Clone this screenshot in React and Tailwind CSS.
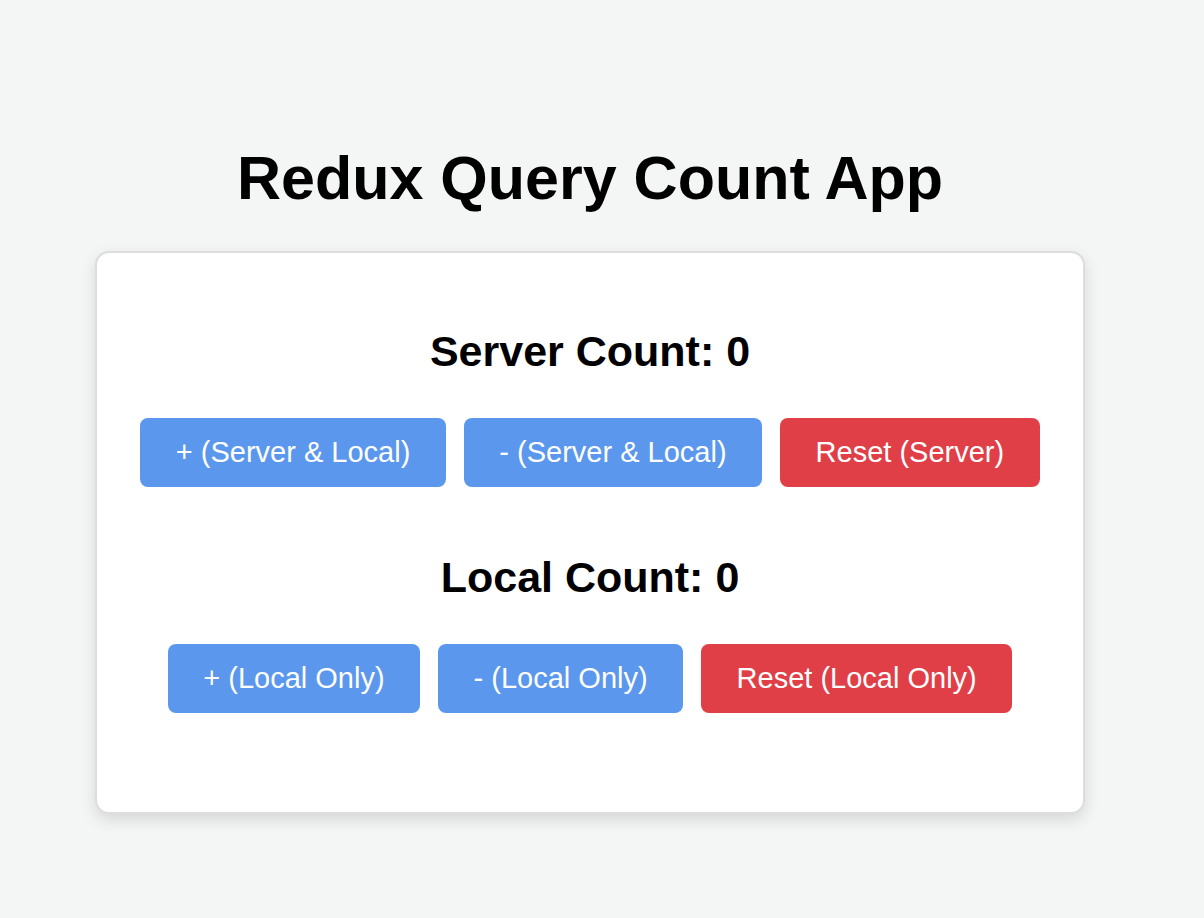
const serverButtons = [
  { label: '+ (Server & Local)', color: 'bg-[#5a97ed]' },
  { label: '- (Server & Local)', color: 'bg-[#5a97ed]' },
  { label: 'Reset (Server)', color: 'bg-[#e03f47]' },
];

const localButtons = [
  { label: '+ (Local Only)', color: 'bg-[#5a97ed]' },
  { label: '- (Local Only)', color: 'bg-[#5a97ed]' },
  { label: 'Reset (Local Only)', color: 'bg-[#e03f47]' },
];

function Counter({ title, buttons, className }) {
  return (
    <div className={`flex flex-col items-center ${className}`}>
      <h2 className="text-[43px] leading-[50px] font-bold text-black">{title}</h2>
      <div className="mt-[42px] flex gap-[18px]">
        {buttons.map((b) => (
          <button
            key={b.label}
            className={`${b.color} h-[69px] px-[35.5px] rounded-[8px] text-white text-[29px]`}
          >
            {b.label}
          </button>
        ))}
      </div>
    </div>
  );
}

export default function App() {
  return (
    <div className="min-h-screen bg-[#f4f5f5] flex flex-col items-center pt-[143px] pr-[24px] font-['Liberation_Sans',Arial,sans-serif]">
      <h1 className="text-[61px] leading-[70px] font-bold text-black">Redux Query Count App</h1>
      <div className="mt-[38px] w-[990px] bg-white border-2 border-[#dddddd] rounded-[14px] shadow-[0_6px_16px_rgba(0,0,0,0.12)] pt-[73px] pb-[99px] flex flex-col items-center">
        <Counter title="Server Count: 0" buttons={serverButtons} />
        <Counter title="Local Count: 0" buttons={localButtons} className="mt-[65px]" />
      </div>
    </div>
  );
}
